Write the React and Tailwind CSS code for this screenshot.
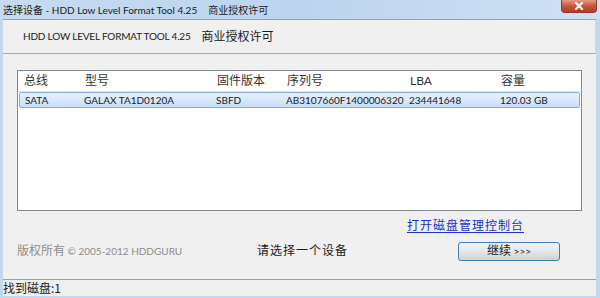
import React from "react";

const font = "font-['Lato','Noto_Sans_CJK_SC',sans-serif]";

const columns = [
  { label: "总线", width: "w-[61px]", value: "SATA" },
  { label: "型号", width: "w-[132px]", value: "GALAX TA1D0120A" },
  { label: "固件版本", width: "w-[70px]", value: "SBFD" },
  { label: "序列号", width: "w-[123px]", value: "AB3107660F1400006320" },
  { label: "LBA", width: "w-[91px]", value: "234441648" },
  { label: "容量", width: "flex-1", value: "120.03 GB" },
];

function CloseButton() {
  return (
    <div className="absolute right-[3px] top-0 w-[36px] h-[13px] rounded-b-[4px] border border-t-0 border-[#8b3a2c] bg-gradient-to-b from-[#e59a87] via-[#c9543c] to-[#b33a22] flex items-center justify-center">
      <svg width="10" height="8" viewBox="0 0 10 8">
        <path d="M2 1 L8 7 M8 1 L2 7" stroke="#ffffff" strokeWidth="2" strokeLinecap="square" />
      </svg>
    </div>
  );
}

export default function App() {
  return (
    <div className={`w-[600px] h-[298px] flex flex-col bg-[#c2d8ef] text-[#1a1a1a] ${font}`}>
      {/* Title bar */}
      <div className="relative h-[19px] bg-gradient-to-r from-[#c6dbf2] via-[#bcd4ee] to-[#cfe1f5] flex items-center pl-[3px] text-[10px] leading-none">
        <span>选择设备</span>
        <span>&nbsp;- HDD Low Level Format Tool 4.25</span>
        <span className="ml-[11px]">商业授权许可</span>
        <CloseButton />
      </div>

      {/* Client area */}
      <div className="flex-1 ml-[3px] mr-[4px] mb-[2px] flex flex-col bg-[#f0f0f0] border-t border-[#8ea3bb]">
        {/* Header */}
        <div className="h-[34px] flex items-center pl-[20px] border-b border-[#a9a9a9] border-r border-r-[#d6d6d6] text-[10px]">
          <span className="tracking-[-0.2px]">HDD LOW LEVEL FORMAT TOOL 4.25</span>
          <span className="ml-[11px] text-[12px]">商业授权许可</span>
        </div>

        {/* Device list */}
        <div className="mt-[16px] mx-[14px] h-[141px] bg-white border border-[#828790] text-[10px]">
          <div className="h-[21px] flex items-center border-b border-[#e5e5e5]">
            {columns.map((c) => (
              <div key={c.label} className={`${c.width} pl-[6px] text-[12px] text-[#333]`}>
                {c.label}
              </div>
            ))}
          </div>
          <div className="mx-[1px] h-[16px] flex items-center border border-[#84acdd] rounded-[2px] bg-gradient-to-b from-[#e9f2fd] to-[#c8def8]">
            {columns.map((c, i) => (
              <div key={c.label} className={`${c.width} ${i === 0 ? "pl-[5px]" : "pl-[3px]"} leading-none`}>
                {c.value}
              </div>
            ))}
          </div>
        </div>

        {/* Link */}
        <div className="mt-[6px] pr-[72px] flex justify-end">
          <span className="text-[12px] text-[#1b32c8] underline underline-offset-2 tracking-[1px]">
            打开磁盘管理控制台
          </span>
        </div>

        {/* Footer row */}
        <div className="mt-[6px] flex items-center pl-[14px] pr-[36px] h-[20px]">
          <span className="text-[10px] text-[#8c8c8c] w-[240px]">
            <span className="text-[12px]">版权所有</span> © 2005-2012 HDDGURU
          </span>
          <span className="text-[12px] tracking-[1px]">请选择一个设备</span>
          <div className="ml-auto w-[102px] h-[19px] border border-[#3c7fb1] rounded-[3px] bg-gradient-to-b from-[#f4f4f4] via-[#e6e6e6] to-[#d2d2d2] flex items-center justify-center text-[10px]">
            <span className="text-[12px]">继续</span>&nbsp;&gt;&gt;&gt;
          </div>
        </div>

        {/* Status bar */}
        <div className="mt-auto h-[17px] border-t border-[#a0a0a0] flex items-center text-[12px] font-['Noto_Sans_CJK_SC',sans-serif]">
          <span>找到磁盘:1</span>
        </div>
      </div>
    </div>
  );
}
